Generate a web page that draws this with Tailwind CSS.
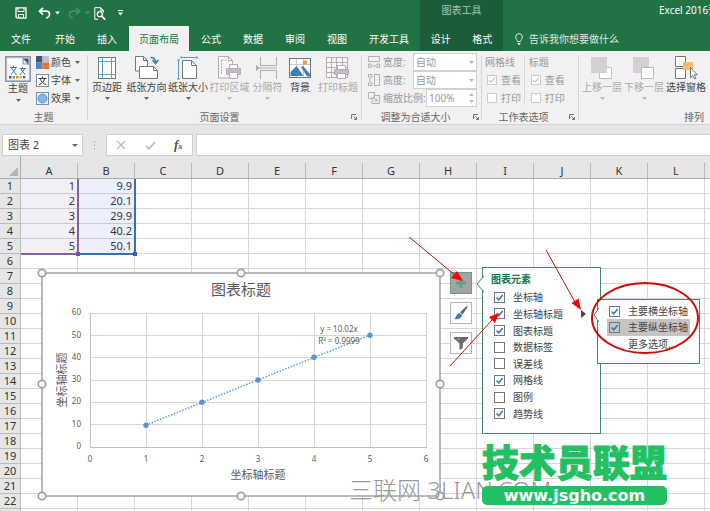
<!DOCTYPE html>
<html lang="zh-CN">
<head>
<meta charset="utf-8">
<title>Excel 2016</title>
<script src="https://cdn.jsdelivr.net/npm/@tailwindcss/browser@4"></script>
</head>
<body class="overflow-hidden bg-white">
<div class="relative h-screen overflow-hidden bg-[#e6e6e6] font-['Noto_Sans','Noto_Sans_CJK_SC',sans-serif] text-[10px] leading-[14px] text-[#444]">

<!-- Title bar and tabs -->
<header class="flex h-[51px] bg-[#217346] text-white">
  <div class="flex w-[420px] shrink-0 flex-col">
    <div class="flex h-[26px] items-center pl-[15px]">
      <button aria-label="保存" class="mr-[11px]"><svg class="size-3" viewBox="0 0 12 12" fill="none" stroke="#fff"><path d="M1 .8h10v10.4H2.4L1 10z" stroke-width="1.3"/><path d="M3 1v3.5h6V1M3.5 11V7.5h5V11M5 9.5v1.500"/></svg></button>
      <button aria-label="撤消"><svg class="h-3 w-[13px]" viewBox="0 0 13 12" fill="none" stroke="#fff" stroke-width="1.7"><path d="M5 .8 1.500 4.200 5 7.600M1.800 4.200h6.400c4.400 0 4.400 6.600 0 6.600"/></svg></button>
      <svg class="mr-2 ml-1 h-1 w-[5px]" viewBox="0 0 5 4"><path d="M0 .5h5L2.500 3.500z" fill="#fff"/></svg>
      <button aria-label="恢复"><svg class="h-3 w-[13px]" viewBox="0 0 13 12" fill="none" stroke="#4a9068" stroke-width="1.700"><path d="M8 .8l3.500 3.400L8 7.600M11.200 4.200H4.800c-4.400 0-4.400 6.600 0 6.600"/></svg></button>
      <svg class="mr-1 ml-1 h-1 w-[5px]" viewBox="0 0 5 4"><path d="M0 .5h5L2.500 3.500z" fill="#4a9068"/></svg>
      <button aria-label="打印预览" class="mr-3"><svg class="h-[13px] w-3" viewBox="0 0 12 13" fill="none" stroke="#fff"><path d="M4 12.300H.8V.7h6l2.700 2.800v2M6.800.8v2.900h2.700"/><circle cx="5.800" cy="7.200" r="2.500" stroke-width="1.300"/><path d="M7.600 9l3.600 3.600" stroke-width="1.700"/></svg></button>
      <button aria-label="自定义快速访问工具栏"><svg class="h-[6px] w-[5px]" viewBox="0 0 5 6"><path d="M0 0h5v1H0zM0 2.500h5L2.500 5.500z" fill="#fff"/></svg></button>
    </div>
    <nav class="flex h-[25px] items-stretch whitespace-nowrap">
      <button class="mr-0.5 px-[11px]">文件</button>
      <button class="px-[11px]">开始</button>
      <button class="px-[11px]">插入</button>
      <button class="mx-px bg-[#f1f1f1] px-[10px] text-[#217346]">页面布局</button>
      <button class="px-[11px]">公式</button>
      <button class="px-[11px]">数据</button>
      <button class="px-[11px]">审阅</button>
      <button class="px-[11px]">视图</button>
      <button class="px-[11px]">开发工具</button>
    </nav>
  </div>
  <div class="flex w-[83px] shrink-0 flex-col bg-[#1b5c39]">
    <div class="flex h-[26px] justify-center pt-[3px] text-[#a5c7b3]">图表工具</div>
    <nav class="flex h-[25px] items-stretch whitespace-nowrap">
      <button class="flex-1">设计</button>
      <button class="flex-1">格式</button>
    </nav>
  </div>
  <div class="flex min-w-0 flex-1 flex-col overflow-hidden whitespace-nowrap">
    <div class="h-[26px] pt-[3px] pl-[156px]">Excel 2016预览版</div>
    <button class="flex h-[25px] items-center gap-[6px] pl-3 text-[#dcebe2]">
      <svg class="h-3 w-2" viewBox="0 0 8 12" fill="none" stroke="#dcebe2"><path d="M2.500 8.500C2.500 7 .7 6 .7 3.900a3.300 3.300 0 0 1 6.600 0C7.300 6 5.500 7 5.500 8.500zM2.500 10.500h3M3 11.700h2"/></svg>
      告诉我你想要做什么
    </button>
  </div>
</header>

<!-- Ribbon -->
<section class="flex h-[74px] overflow-hidden border-b border-[#d2d2d2] bg-[#f1f1f1] whitespace-nowrap">
  <!-- Themes -->
  <div class="flex w-[87px] shrink-0 flex-col justify-between">
    <div class="flex gap-1 pt-[2px] pl-1">
      <button class="flex w-7 flex-col items-center pt-[3px]">
        <svg class="h-[26px] w-[26px]" viewBox="0 0 26 26"><rect x=".7" y=".7" width="24.600" height="24.600" fill="#d6dbe6" stroke="#8792a5" stroke-width="1.400"/><path d="M2.500 2.500h16l5 5v16h-21z" fill="#fff"/><path d="M18 2.500h5.500V9z" fill="#44546a"/><path d="M18 2.500V8h5.500z" fill="#e8ecf3" stroke="#44546a" stroke-width=".6"/><g stroke="#3d7ebf" fill="none"><path d="M5 11.500h7M8.500 9.500v2M6 19l5.500-7.500M6 11.500 11.500 19"/><path d="M14.500 12.500h6.500M17.500 11v1.500M15 19l5-6.500M15.500 12.500 20.500 19"/></g><g><path d="M4 20h2.500v2.500H4z" fill="#44546a"/><path d="M7.500 20H10v2.500H7.500z" fill="#70ad47"/><path d="M11 20h2.500v2.500H11z" fill="#ed7d31"/><path d="M14.500 20H17v2.500h-2.500z" fill="#ffc000"/><path d="M18 20h2.500v2.500H18z" fill="#4472c4"/></g></svg>
        <span class="leading-[13px]">主题</span>
        <svg class="mt-1 h-[3px] w-[5px]" viewBox="0 0 5 3"><path d="M0 0h5L2.500 3z" fill="#666"/></svg>
      </button>
      <div class="flex flex-col text-[10px]">
        <button class="flex h-[18px] items-center gap-[2px]"><svg class="size-[13px]" viewBox="0 0 13 13"><path d="M0 0h6.500v6.500H0z" fill="#44546a"/><path d="M6.500 0H13v6.500H6.500z" fill="#b8c4da"/><path d="M0 6.500h6.500V13H0z" fill="#4a86cf"/><path d="M6.500 6.500H13V13H6.500z" fill="#f0732e"/></svg>颜色<svg class="ml-[2px] h-[3px] w-[5px]" viewBox="0 0 5 3"><path d="M0 0h5L2.500 3z" fill="#666"/></svg></button>
        <button class="flex h-[18px] items-center gap-[2px]"><svg class="size-[13px]" viewBox="0 0 13 13" fill="none"><rect x=".5" y=".5" width="12" height="12" fill="#fff" stroke="#7f8fa6"/><path d="M2.500 4.500h8M6.500 2.500v2M3 10.800c3-1.300 5-3.300 5.600-6.300M4.300 4.500c.7 3 2.700 5 6 6.300" stroke="#333"/></svg>字体<svg class="ml-[2px] h-[3px] w-[5px]" viewBox="0 0 5 3"><path d="M0 0h5L2.500 3z" fill="#666"/></svg></button>
        <button class="flex h-[18px] items-center gap-[2px]"><svg class="size-[13px]" viewBox="0 0 13 13"><rect x=".5" y=".5" width="12" height="12" fill="#e9f1fa" stroke="#7f8fa6"/><circle cx="6.500" cy="6.500" r="4.500" fill="#84b4e3" stroke="#5e96d0"/></svg>效果<svg class="ml-[2px] h-[3px] w-[5px]" viewBox="0 0 5 3"><path d="M0 0h5L2.500 3z" fill="#666"/></svg></button>
      </div>
    </div>
    <div class="text-center text-[#666]">主题</div>
  </div>
  <div class="my-1 w-px shrink-0 bg-[#d5d5d5]"></div>

  <!-- Page setup -->
  <div class="flex w-[273px] shrink-0 flex-col justify-between">
    <div class="flex pt-[5px]">
      <button class="flex w-[38px] flex-col items-center">
        <svg class="size-6" viewBox="0 0 24 24" fill="none"><rect x="3.500" y="1.500" width="17" height="21" fill="#fff" stroke="#777"/><path d="M7.500 1v22M16.500 1v22M3 5.500h18M3 18.500h18" stroke="#5b9bd5"/></svg>
        <span>页边距</span><svg class="mt-[3px] h-[3px] w-[5px]" viewBox="0 0 5 3"><path d="M0 0h5L2.500 3z" fill="#666"/></svg>
      </button>
      <button class="flex w-[41px] flex-col items-center">
        <svg class="size-6" viewBox="0 0 24 24" fill="none"><path d="M.5.500h8l4 4V15H.5z" fill="#fff" stroke="#777"/><path d="M8.500.500v4h4" stroke="#777"/><path d="M4.500 10.500h14l4 4v8h-18z" fill="#fff" stroke="#777"/><path d="M18.500 10.500v4h4" stroke="#777"/><path d="M15.500 1.500c4 0 5 2 5 5M17.500 4l3 3.500L23.500 4" stroke="#3d7ebf" stroke-width="1.700"/></svg>
        <span>纸张方向</span><svg class="mt-[3px] h-[3px] w-[5px]" viewBox="0 0 5 3"><path d="M0 0h5L2.500 3z" fill="#666"/></svg>
      </button>
      <button class="flex w-[42px] flex-col items-center">
        <svg class="size-6" viewBox="0 0 24 24" fill="none"><path d="M6.500 4.500h9l5 5v13h-14z" fill="#fff" stroke="#777"/><path d="M15.500 4.500v5h5" stroke="#777"/><path d="M5 1.500h16M5 0v3M21 0v3M2.500 4v19M1 4h3M1 23h3" stroke="#5b9bd5"/></svg>
        <span>纸张大小</span><svg class="mt-[3px] h-[3px] w-[5px]" viewBox="0 0 5 3"><path d="M0 0h5L2.500 3z" fill="#666"/></svg>
      </button>
      <button disabled class="flex w-[41px] flex-col items-center text-[#aaa]">
        <svg class="size-6" viewBox="0 0 24 24" fill="none" stroke="#b5abb5"><path d="M.5.500h10l4 4V22H.5z" fill="#f8f5f8"/><path d="M10.500.500v4h4"/><path d="M3.500 4v15M3.500 4h5" stroke-dasharray="2 1"/><path d="M11.500 8.500h8v5h-8z" fill="#fff"/><path d="M8.500 12.500h14v6h-14z" fill="#c6bcc6"/><path d="M11.500 16.500h8v6h-8z" fill="#fff"/></svg>
        <span>打印区域</span><svg class="mt-[3px] h-[3px] w-[5px]" viewBox="0 0 5 3"><path d="M0 0h5L2.500 3z" fill="#bbb"/></svg>
      </button>
      <button disabled class="flex w-[35px] flex-col items-center text-[#aaa]">
        <svg class="size-6" viewBox="0 0 24 24" fill="none" stroke="#b5abb5"><path d="M4.500 1v8.500h16V1M4.500 23v-8.500h16V23M3 12h18"/><path d="M0 9.500 3 12l-3 2.500z" fill="#b5abb5"/></svg>
        <span>分隔符</span><svg class="mt-[3px] h-[3px] w-[5px]" viewBox="0 0 5 3"><path d="M0 0h5L2.500 3z" fill="#bbb"/></svg>
      </button>
      <button class="flex w-[30px] flex-col items-center">
        <svg class="size-6" viewBox="0 0 24 24"><rect x="1.500" y="2.500" width="21" height="19" fill="#fff" stroke="#777"/><path d="M8.500 3v18M15.500 3v18M2 8.500h20" stroke="#c9c9c9" fill="none"/><circle cx="17" cy="6.500" r="2.300" fill="#f0a03c"/><path d="M2.500 20v-4l6-6 7 10zM13 11l2-1 7 8v2.500h-3z" fill="#3d7ebf"/></svg>
        <span>背景</span>
      </button>
      <button disabled class="flex w-[46px] flex-col items-center text-[#aaa]">
        <svg class="size-6" viewBox="0 0 24 24" fill="none" stroke="#b5abb5"><path d="M.5 1.500h21v20H.5z" fill="#f8f5f8"/><path d="M.5 6.500h21M.5 11.500h21M.5 16.500h21M5.500 1.500v20M10.500 1.500v20M16.500 1.500v20"/><path d="M11.500 9.500h8v5h-8z" fill="#fff"/><path d="M8.500 13.500h14v5h-14z" fill="#c6bcc6"/><path d="M11.500 17.500h8v5h-8z" fill="#fff"/></svg>
        <span>打印标题</span>
      </button>
    </div>
    <div class="flex items-center pr-1 text-[#666]"><span class="flex-1 text-center">页面设置</span><button aria-label="页面设置选项"><svg class="size-[6px]" viewBox="0 0 6 6" fill="none" stroke="#777"><path d="M.5 5V.5H5M2.500 2.500l3 3M5.500 3v2.500H3"/></svg></button></div>
  </div>
  <div class="my-1 w-px shrink-0 bg-[#d5d5d5]"></div>

  <!-- Scale to fit -->
  <div class="flex w-[119px] shrink-0 flex-col justify-between text-[#999]">
    <div class="flex flex-col pt-[2px] pr-1 pl-[6px]">
      <div class="flex h-[18px] items-center"><svg class="mr-[3px] size-3" viewBox="0 0 12 12" fill="none" stroke="#b5abb5"><path d="M.5.500h11v5H.5zM.5 8v3.500h2.500V8zM9 8v3.500h2.500V8zM4 10h4"/></svg><label for="w" class="flex-1">宽度:</label><select id="w" disabled class="h-[18px] w-[64px] appearance-none border border-[#d0d0d0] bg-white pl-[2px] leading-[14px]"><option>自动</option></select><svg class="-ml-2 h-[3px] w-[5px]" viewBox="0 0 5 3"><path d="M0 0h5L2.500 3z" fill="#bbb"/></svg><span class="w-[3px]"></span></div>
      <div class="flex h-[18px] items-center"><svg class="mr-[3px] size-3" viewBox="0 0 12 12" fill="none" stroke="#b5abb5"><path d="M6.500.500h5v11h-5zM.5.500H4V3H.5zM.5 9H4v2.500H.5zM2 4v4"/></svg><label for="h" class="flex-1">高度:</label><select id="h" disabled class="h-[18px] w-[64px] appearance-none border border-[#d0d0d0] bg-white pl-[2px] leading-[14px]"><option>自动</option></select><svg class="-ml-2 h-[3px] w-[5px]" viewBox="0 0 5 3"><path d="M0 0h5L2.500 3z" fill="#bbb"/></svg><span class="w-[3px]"></span></div>
      <div class="flex h-[18px] items-center"><svg class="mr-[3px] size-3" viewBox="0 0 12 12" fill="none" stroke="#b5abb5"><path d="M.5.500h6v6h-6zM4 6.500v5h7.500v-8H6.500M5 5l4 4M9 6.500V9H6.500"/></svg><label for="s" class="flex-1">缩放比例:</label><input id="s" disabled value="100%" class="h-[18px] w-[51px] border border-[#d0d0d0] bg-white pl-[2px]"><svg class="-ml-2 h-[10px] w-[5px]" viewBox="0 0 5 10"><path d="M0 3h5L2.500 0zM0 7h5L2.500 10z" fill="#bbb"/></svg><span class="w-[3px]"></span></div>
    </div>
    <div class="flex items-center pr-[2px] text-[#666]"><span class="flex-1 pr-1 text-center">调整为合适大小</span><button aria-label="调整选项"><svg class="size-[6px]" viewBox="0 0 6 6" fill="none" stroke="#777"><path d="M.5 5V.5H5M2.500 2.500l3 3M5.500 3v2.500H3"/></svg></button></div>
  </div>
  <div class="my-1 w-px shrink-0 bg-[#d5d5d5]"></div>

  <!-- Sheet options -->
  <div class="flex w-[96px] shrink-0 flex-col justify-between text-[#999]">
    <div class="flex pt-[2px] pl-[3px]">
      <fieldset disabled class="w-[44px]">
        <legend class="float-left h-[18px] w-full leading-[18px]">网格线</legend>
        <label class="flex h-[18px] items-center gap-1 pl-[2px]"><span class="relative size-[10px]"><input type="checkbox" checked class="block size-[10px] appearance-none border border-[#ccc] bg-white"><svg class="absolute inset-0" viewBox="0 0 10 10"><path d="M2 5l2 2.200L8 2.500" fill="none" stroke="#aaa"/></svg></span>查看</label>
        <label class="flex h-[18px] items-center gap-1 pl-[2px]"><input type="checkbox" class="size-[10px] appearance-none border border-[#ccc] bg-white">打印</label>
      </fieldset>
      <div class="my-[2px] w-px bg-[#d9d9d9]"></div>
      <fieldset disabled class="pl-1">
        <legend class="float-left h-[18px] w-full leading-[18px]">标题</legend>
        <label class="flex h-[18px] items-center gap-1 pl-[2px]"><span class="relative size-[10px]"><input type="checkbox" checked class="block size-[10px] appearance-none border border-[#ccc] bg-white"><svg class="absolute inset-0" viewBox="0 0 10 10"><path d="M2 5l2 2.200L8 2.500" fill="none" stroke="#aaa"/></svg></span>查看</label>
        <label class="flex h-[18px] items-center gap-1 pl-[2px]"><input type="checkbox" class="size-[10px] appearance-none border border-[#ccc] bg-white">打印</label>
      </fieldset>
    </div>
    <div class="flex items-center pr-[3px] text-[#666]"><span class="flex-1 pr-1 text-center">工作表选项</span><button aria-label="工作表选项设置"><svg class="size-[6px]" viewBox="0 0 6 6" fill="none" stroke="#777"><path d="M.5 5V.5H5M2.500 2.500l3 3M5.500 3v2.500H3"/></svg></button></div>
  </div>
  <div class="my-1 w-px shrink-0 bg-[#d5d5d5]"></div>

  <!-- Arrange -->
  <div class="flex w-[230px] shrink-0 flex-col justify-between">
    <div class="flex pt-[5px] pl-[2px]">
      <button disabled class="flex w-[42px] flex-col items-center text-[#aaa]">
        <svg class="size-6" viewBox="0 0 24 24"><path d="M9.500 11.500h12v11h-12z" fill="#fff" stroke="#c6bcc6"/><path d="M1 1h16v16H1z" fill="#d6ced6"/></svg>
        <span>上移一层</span><svg class="mt-[3px] h-[3px] w-[5px]" viewBox="0 0 5 3"><path d="M0 0h5L2.500 3z" fill="#bbb"/></svg>
      </button>
      <button disabled class="flex w-[42px] flex-col items-center text-[#aaa]">
        <svg class="size-6" viewBox="0 0 24 24"><path d="M1 1h16v16H1z" fill="#d6ced6"/><path d="M9.500 11.500h12v11h-12z" fill="#fff" stroke="#c0b5c0"/></svg>
        <span>下移一层</span><svg class="mt-[3px] h-[3px] w-[5px]" viewBox="0 0 5 3"><path d="M0 0h5L2.500 3z" fill="#bbb"/></svg>
      </button>
      <button class="flex w-[42px] flex-col items-center">
        <svg class="size-6" viewBox="0 0 24 24"><path d="M1.500.500h10v10h-10zM1.500 12.500h10v10h-10z" fill="#fff" stroke="#777"/><path d="M9 6h10v8H9z" fill="#f3bd6b"/><path d="M16.500 11.500v10l2.300-2 1.700 3.500 1.500-.8-1.700-3.400h3z" fill="#fff" stroke="#666" stroke-width=".9"/></svg>
        <span>选择窗格</span>
      </button>
    </div>
    <div class="text-center text-[#666]">排列</div>
  </div>
</section>

<!-- Formula bar -->
<section class="flex h-[31px] items-end">
  <div class="ml-[2px] flex h-[22px] w-[81px] shrink-0 items-center border border-[#d0d0d0] bg-white pr-1"><input aria-label="名称框" value="图表 2" class="w-full min-w-0 pl-[5px] text-[11px] outline-none"><svg class="h-[3px] w-[6px] shrink-0" viewBox="0 0 6 3"><path d="M0 0h6L3 3z" fill="#666"/></svg></div>
  <svg class="mx-[10px] h-[22px] w-[3px] shrink-0" viewBox="0 0 3 22" fill="#aaa"><path d="M1 7h1v1.500H1zM1 10.500h1V12H1zM1 14h1v1.500H1z"/></svg>
  <div class="flex h-[22px] w-[87px] shrink-0 items-center justify-around border border-[#d0d0d0] bg-white">
    <button aria-label="取消"><svg class="size-[10px]" viewBox="0 0 10 10"><path d="M1 1l8 8M9 1 1 9" stroke="#bbb" stroke-width="1.300"/></svg></button>
    <button aria-label="输入"><svg class="h-[9px] w-[11px]" viewBox="0 0 11 9"><path d="M1 5l3 3 6-7" fill="none" stroke="#bbb" stroke-width="1.700"/></svg></button>
    <button class="font-['Liberation_Serif',serif] text-[13px] font-bold text-[#555] italic">f<span class="text-[9px]">x</span></button>
  </div>
  <input aria-label="编辑栏" class="ml-[3px] h-[22px] min-w-0 flex-1 border border-r-0 border-[#d0d0d0] bg-white">
</section>

<!-- Worksheet -->
<table class="w-[762px] table-fixed border-separate border-spacing-0 bg-white text-[11px] leading-[14px] text-[#333]">
  <thead><tr id="cols" class="h-[23px] bg-[#e6e6e6]"><th class="w-[21px] border-r border-b border-[#ababab] p-0"><svg class="mt-2 ml-[9px] size-[9px]" viewBox="0 0 9 9"><path d="M9 0v9H0z" fill="#b4b4b4"/></svg></th></tr></thead>
  <tbody id="rows"></tbody>
</table>

<!-- Source data ranges -->
<div class="absolute top-[179px] left-[21px] h-[76px] w-[58px] border-r-2 border-b-2 border-[#8460a8] bg-[#8460a8]/10"><i class="absolute -right-[3px] -bottom-[3px] size-1 bg-[#7a4fa3]"></i></div>
<div class="absolute top-[179px] left-[79px] h-[76px] w-[57px] border-r-2 border-b-2 border-[#3a6fb7] bg-[#3a6fe0]/10"><i class="absolute -right-[3px] -bottom-[3px] size-1 bg-[#2f62c0]"></i></div>

<!-- Chart -->
<figure class="absolute top-[267px] left-[36px]">
  <svg width="410" height="234" viewBox="36 267 410 234" class="font-['Noto_Sans','Noto_Sans_CJK_SC',sans-serif]" fill="#595959">
    <rect x="42" y="273" width="398" height="223" fill="#fff" stroke="#a3a3a3" stroke-width="1.500"/>
    <path d="M90 313.500h336M90 335.500h336M90 357.500h336M90 380.500h336M90 402.500h336M90 424.500h336M146.500 313v134M202.500 313v134M258.500 313v134M314.500 313v134M370.500 313v134M426.500 313v134" stroke="#d6d6d6" fill="none"/>
    <path d="M90.500 313v134.500H427" stroke="#bfbfbf" fill="none"/>
    <path d="M146 425 370 335" stroke="#5b9bd5" stroke-width="1.500" stroke-dasharray="1.500 1.500" fill="none"/>
    <g fill="#5b93cf"><circle cx="146" cy="425.300" r="2.700"/><circle cx="202" cy="402.300" r="2.700"/><circle cx="258" cy="380" r="2.700"/><circle cx="314" cy="357.300" r="2.700"/><circle cx="370" cy="335.300" r="2.700"/></g>
    <text x="241" y="295" font-size="15" text-anchor="middle">图表标题</text>
    <g font-size="8" text-anchor="end"><text x="81" y="315">60</text><text x="81" y="338">50</text><text x="81" y="360">40</text><text x="81" y="382">30</text><text x="81" y="404">20</text><text x="81" y="427">10</text><text x="81" y="449">0</text></g>
    <g font-size="8" text-anchor="middle"><text x="90" y="462">0</text><text x="146" y="462">1</text><text x="202" y="462">2</text><text x="258" y="462">3</text><text x="314" y="462">4</text><text x="370" y="462">5</text><text x="426" y="462">6</text><text x="339" y="332">y = 10.02x</text><text x="339" y="344">R² = 0.9999</text></g>
    <text x="258" y="479" font-size="11" text-anchor="middle">坐标轴标题</text>
    <text transform="translate(66 380) rotate(-90)" font-size="11" text-anchor="middle">坐标轴标题</text>
    <g fill="#fff" stroke="#a0a0a0" stroke-width="1.700"><circle cx="42" cy="273" r="3.700"/><circle cx="241" cy="273" r="3.700"/><circle cx="440" cy="273" r="3.700"/><circle cx="42" cy="384" r="3.700"/><circle cx="440" cy="384" r="3.700"/><circle cx="42" cy="496" r="3.700"/><circle cx="241" cy="496" r="3.700"/><circle cx="440" cy="496" r="3.700"/></g>
  </svg>
</figure>

<!-- Chart side buttons -->
<div class="absolute top-[272px] left-[450px] flex flex-col gap-2">
  <button aria-label="图表元素" class="flex size-[22px] items-center justify-center border border-[#6c9a83] bg-[#a3a3a3]"><svg class="size-3" viewBox="0 0 12 12"><path d="M4.500 1h3v3.500H11v3H7.500V11h-3V7.500H1v-3h3.500z" fill="#5fa585"/></svg></button>
  <button aria-label="图表样式" class="flex size-[22px] items-center justify-center border border-[#b5b5b5] bg-white"><svg class="size-4" viewBox="0 0 16 16"><path d="M15 1.500 9.500 9.500 7 7.500 13 1.500z" fill="#666"/><path d="M6.500 8 9 10c-.5 4-4.500 5-8 4 2.500-1 2-5.500 5.500-6z" fill="#3d7ebf"/></svg></button>
  <button aria-label="图表筛选器" class="flex size-[22px] items-center justify-center border border-[#b5b5b5] bg-white"><svg class="size-4" viewBox="0 0 16 16"><path d="M1 2h14v1.500L9.800 8.500V13L6.500 15V8.500L1 3.500z" fill="#6a6a6a"/><path d="M4 3.500h3l-1.500 2z" fill="#aaa"/></svg></button>
</div>

<!-- Chart elements menu -->
<div class="absolute top-[267px] left-[482px] h-[167px] w-[119px] border border-[#3f8c6c] bg-white pt-1">
  <svg class="absolute top-[8px] -left-[7px] h-[16px] w-2" viewBox="0 0 8 16"><path d="M8 0 1 8l7 8" fill="#fff" stroke="#3f8c6c"/></svg>
  <h2 class="pl-2 font-bold text-[#217346]">图表元素</h2>
  <ul id="elements" class="mt-[3px] grid h-[133px] grid-rows-8 pl-[11px]"></ul>
  <svg class="absolute top-[42px] right-[14px] h-2 w-[5px]" viewBox="0 0 5 8"><path d="M0 0l5 4-5 4z" fill="#444"/></svg>
</div>
<div class="absolute top-[299px] left-[597px] h-[65px] w-[103px] border border-[#3f8c6c] bg-white pt-[3px] pr-[9px] pl-[9px]">
  <svg class="absolute top-[8px] -left-[5px] h-[14px] w-[6px]" viewBox="0 0 6 14"><path d="M6 0 1 7l5 7" fill="#fff" stroke="#3f8c6c"/></svg>
  <ul id="axes" class="grid h-[49px] grid-rows-3"></ul>
</div>

<!-- Annotations -->
<svg class="pointer-events-none absolute top-[230px] left-[400px]" width="310" height="150" viewBox="400 230 310 150" fill="none" stroke="#d00a0a">
  <ellipse cx="645" cy="318" rx="53" ry="35" stroke-width="2"/>
  <path d="M409 237l46 38M546 250l29 52M450 366l42-46"/>
  <g fill="#f00" stroke="none"><path d="M463 281l-12-3 6-7zM581 310l-9.500-7 7-4.500zM499 313l-10 4 6 6z"/></g>
</svg>

<!-- Watermarks -->
<div class="absolute top-[472px] left-[349px] text-[24px] leading-[36px] font-light whitespace-nowrap text-[#999]">三联网 3LIAN.COM</div>
<div class="absolute top-[440px] left-[482px] flex flex-col items-center">
  <strong class="text-[37px] leading-[46px] font-black whitespace-nowrap text-[#22c063] [-webkit-text-stroke:1px_#22c063]">技术员联盟</strong>
  <a href="#" class="flex h-[19px] w-full items-center justify-center rounded-[5px] bg-[#22c063] font-['DejaVu_Sans',sans-serif] text-[16px] leading-[18px] font-bold text-white">www.jsgho.com</a>
</div>
</div>

<script>
const cols = 'ABCDEFGHIJKLM'.split('');
const data = [['1', '9.9'], ['2', '20.1'], ['3', '29.9'], ['4', '40.2'], ['5', '50.1']];
document.getElementById('cols').insertAdjacentHTML('beforeend', cols.map(c =>
  `<th class="w-[57px] border-b border-[#ababab] p-0 font-normal"><div class="mt-[7px] h-[15px] border-r border-[#bbb] pt-px">${c}</div></th>`).join(''));
let html = '';
for (let r = 0; r < 23; r++) {
  html += `<tr class="h-[15px]"><th class="h-[15px] border-r border-b border-[#bbb] bg-[#e6e6e6] p-0 text-center font-normal">${r < 22 ? r + 1 : ''}</th>` +
    cols.map((c, i) => `<td class="h-[15px] border-r border-b border-[#d6d6d6] p-0 pr-[2px] text-right">${data[r]?.[i] ?? ''}</td>`).join('') + '</tr>';
}
document.getElementById('rows').innerHTML = html;

const box = on => `<span class="relative size-[11px] shrink-0"><input type="checkbox" ${on ? 'checked' : ''} class="block size-[11px] appearance-none border border-[#777]">${on ? '<svg class="absolute inset-0" viewBox="0 0 11 11"><path d="M2.500 5.500l2.200 2.300L8.700 3" fill="none" stroke="#3d74b8" stroke-width="1.500"/></svg>' : ''}</span>`;
document.getElementById('elements').innerHTML = [['坐标轴', 1], ['坐标轴标题', 1], ['图表标题', 1], ['数据标签', 0], ['误差线', 0], ['网格线', 1], ['图例', 0], ['趋势线', 1]]
  .map(([t, on]) => `<li class="flex items-center"><label class="flex items-center gap-2">${box(on)}${t}</label></li>`).join('');
document.getElementById('axes').innerHTML =
  `<li class="flex items-center pl-[2px]"><label class="flex items-center gap-2">${box(1)}主要横坐标轴</label></li>
   <li class="flex items-center bg-[#c4c4c4] pl-[2px]"><label class="flex items-center gap-2">${box(1)}主要纵坐标轴</label></li>
   <li class="flex items-center pl-[21px]"><button>更多选项...</button></li>`;
</script>
</body>
</html>
